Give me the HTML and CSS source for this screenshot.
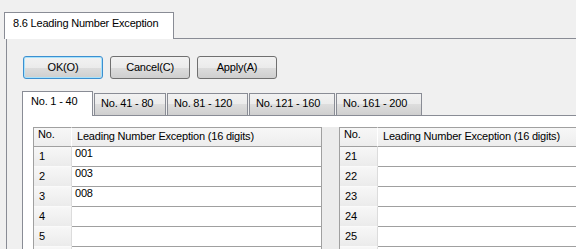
FILE: index.html
```html
<!DOCTYPE html>
<html lang="en">
<head>
  <meta charset="UTF-8">
  <title>8.6 Leading Number Exception</title>
  <link rel="stylesheet" href="styles.css">
</head>
<body>
  <div class="doc-tabs">
    <div class="doc-tab">8.6 Leading Number Exception</div>
  </div>

  <div class="frame">
    <div class="actions">
      <button class="btn default">OK(O)</button>
      <button class="btn">Cancel(C)</button>
      <button class="btn">Apply(A)</button>
    </div>

    <div class="tabs">
      <div class="tab active">No. 1 - 40</div>
      <div class="tab">No. 41 - 80</div>
      <div class="tab">No. 81 - 120</div>
      <div class="tab">No. 121 - 160</div>
      <div class="tab">No. 161 - 200</div>
    </div>

    <div class="tab-panel">
      <div class="grids">
        <div class="grid">
          <div class="hd hd-no">No.</div>
          <div class="hd hd-name">Leading Number Exception (16 digits)</div>
          <div class="no">1</div><div class="val">001</div>
          <div class="no">2</div><div class="val">003</div>
          <div class="no">3</div><div class="val">008</div>
          <div class="no">4</div><div class="val"></div>
          <div class="no">5</div><div class="val"></div>
          <div class="no"></div><div class="val"></div>
        </div>
        <div class="grid-gap"></div>
        <div class="grid">
          <div class="hd hd-no">No.</div>
          <div class="hd hd-name">Leading Number Exception (16 digits)</div>
          <div class="no">21</div><div class="val"></div>
          <div class="no">22</div><div class="val"></div>
          <div class="no">23</div><div class="val"></div>
          <div class="no">24</div><div class="val"></div>
          <div class="no">25</div><div class="val"></div>
          <div class="no"></div><div class="val"></div>
        </div>
      </div>
    </div>
  </div>
</body>
</html>
```

FILE: styles.css
```css
body {
  margin: 0;
  width: 576px;
  height: 249px;
  overflow: hidden;
  background-color: #f0f0f0;
  font-family: "Liberation Sans", Arial, sans-serif;
  font-size: 11px;
  letter-spacing: -0.2px;
  color: #000;
}

/* Document tab */
.doc-tabs {
  display: flex;
  margin-top: 12px;
  padding-left: 4px;
}

.doc-tabs::after {
  content: "";
  flex: 1;
  border-bottom: 1px solid #898c95;
}

.doc-tab {
  width: 160px;
  height: 26px;
  padding-left: 8px;
  line-height: 20px;
  white-space: nowrap;
  background-color: #fff;
  border: 1px solid #898c95;
  border-bottom: none;
}

.frame {
  margin-left: 6px;
  padding: 17px 0 0 15px;
  border-left: 1px solid #898c95;
}

/* Buttons */
.actions {
  display: flex;
  gap: 7px;
  padding-left: 1px;
}

.btn {
  box-sizing: border-box;
  width: 80px;
  height: 23px;
  padding: 0;
  font: inherit;
  letter-spacing: inherit;
  line-height: 21px;
  color: #000;
  border: 1px solid #707070;
  border-radius: 3px;
  background: linear-gradient(#f2f2f2, #ebebeb 50%, #dddddd 50%, #cfcfcf);
}

.btn.default {
  border-color: #3c8fd0;
  box-shadow: inset 0 0 0 1px #a8e2fb;
}

/* Page tabs */
.tabs {
  display: flex;
  align-items: flex-end;
  margin-top: 12px;
}

.tab {
  box-sizing: border-box;
  height: 22px;
  margin-left: 1px;
  padding-left: 6px;
  line-height: 18px;
  white-space: nowrap;
  border: 1px solid #898c95;
  border-bottom: none;
  background: linear-gradient(#f2f2f2, #ebebeb 50%, #dddddd 50%, #cfcfcf);
}

.tab:nth-child(2) { width: 72px; }
.tab:nth-child(3) { width: 81px; }
.tab:nth-child(4) { width: 86px; }
.tab:nth-child(5) { width: 86px; }

.tab.active {
  position: relative;
  z-index: 1;
  width: 71px;
  height: 25px;
  margin: 0 0 -1px 0;
  padding-left: 8px;
  background: #fff;
}

.tab-panel {
  height: 122px;
  padding: 11px 0 0 10px;
  overflow: hidden;
  background-color: #fff;
  border-top: 1px solid #898c95;
  border-left: 1px solid #898c95;
}

/* Grids */
.grids {
  display: flex;
}

.grid {
  box-sizing: border-box;
  flex: 0 0 289px;
  display: grid;
  grid-template-columns: 38px 1fr;
  align-content: start;
  border-left: 1px solid #a0a0a0;
  border-right: 1px solid #a0a0a0;
}

.grid-gap {
  flex: 0 0 17px;
  background-color: #ececec;
}

.hd {
  height: 18px;
  white-space: nowrap;
  border-top: 1px solid #a0a0a0;
  border-bottom: 1px solid #a0a0a0;
  background: linear-gradient(#f7f7f7, #ededed);
}

.hd-no {
  padding-left: 4px;
  line-height: 12px;
  border-right: 1px solid #fff;
}

.hd-name {
  padding-left: 5px;
  line-height: 16px;
}

.no {
  height: 19px;
  padding-left: 5px;
  line-height: 19px;
  border-bottom: 1px solid #fafafa;
  border-right: 1px solid #dcdcdc;
  background: linear-gradient(#f7f7f7, #ebebeb);
}

.val {
  height: 19px;
  padding-left: 3px;
  line-height: 13px;
  border-bottom: 1px solid #a0a0a0;
  background-color: #fff;
}
```
